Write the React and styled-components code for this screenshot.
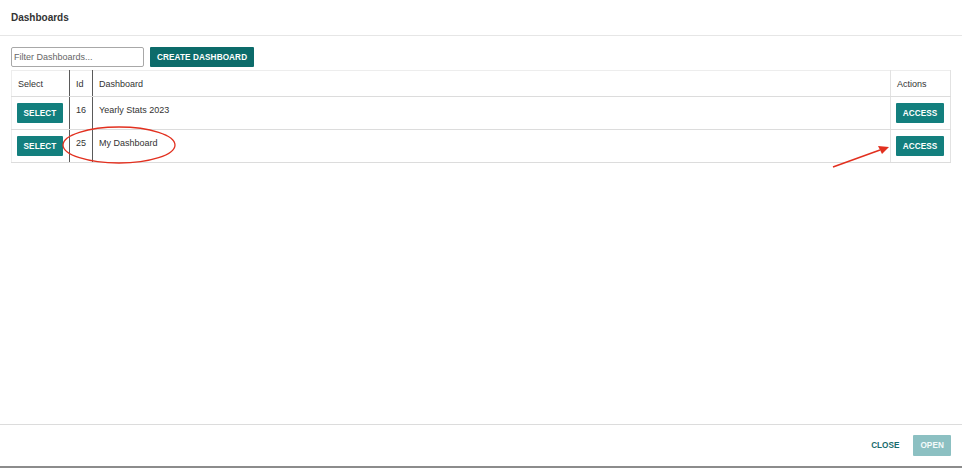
import React from 'react'
import styled, { createGlobalStyle } from 'styled-components'

const Global = createGlobalStyle`
  html, body { margin: 0; padding: 0; background: #fff; }
  body { font-family: "Liberation Sans", Arial, sans-serif; color: #333; }
  * { box-sizing: border-box; }
`

const Dialog = styled.div`
  width: 962px;
  height: 468px;
  display: flex;
  flex-direction: column;
  background: #fff;
  border-bottom: 2px solid #8c8c8c;
`

const Header = styled.div`
  height: 36px;
  padding: 0 11px;
  display: flex;
  align-items: center;
  border-bottom: 1px solid #e6e6e6;
  font-size: 10px;
  font-weight: bold;
  color: #333;
  padding-bottom: 1px;
`

const Content = styled.div`
  flex: 1;
  padding: 11px 11px 0 11px;
  position: relative;
`

const Toolbar = styled.div`
  display: flex;
  gap: 6px;
  height: 20px;
  margin-bottom: 3px;
`

const Filter = styled.input`
  width: 133px;
  height: 20px;
  border: 1px solid #a8a8a8;
  border-radius: 2px;
  padding: 0 2px;
  font-family: inherit;
  font-size: 9px;
  color: #333;
  outline: none;
  &::placeholder { color: #666; }
`

const Button = styled.button`
  border: none;
  border-radius: 1px;
  background: ${p => (p.$dark ? '#0c6b6a' : '#137f7e')};
  color: #fff;
  font-family: inherit;
  font-size: 8.2px;
  font-weight: bold;
  letter-spacing: 0.1px;
  height: ${p => p.$h || 20}px;
  width: ${p => (p.$w ? p.$w + 'px' : 'auto')};
  padding: 0 ${p => p.$px ?? 7}px;
  cursor: pointer;
  white-space: nowrap;
`

const Table = styled.table`
  width: 940px;
  table-layout: fixed;
  border-collapse: collapse;
  font-size: 9px;
  color: #333;
  border-top: 1px solid #ededed;
  border-left: 1px solid #ededed;
  border-right: 1px solid #a9a9a9;
  border-bottom: 1px solid #707070;
`

const Th = styled.th`
  height: 26px;
  text-align: left;
  font-weight: normal;
  padding: 0 6px;
  border-right: 1px solid ${p => (p.$dark ? '#5a5a5a' : '#e2e2e2')};
  border-bottom: 1px solid #dcdcdc;
  width: ${p => (p.$w ? p.$w + 'px' : 'auto')};
`

const Td = styled.td`
  height: 33px;
  padding: 0 ${p => (p.$btn ? 5 : 6)}px;
  vertical-align: ${p => (p.$btn ? 'middle' : 'top')};
  padding-top: ${p => (p.$btn ? 0 : 8)}px;
  border-right: 1px solid ${p => (p.$dark ? '#5a5a5a' : '#e2e2e2')};
  border-bottom: 1px solid #dcdcdc;
  line-height: 11px;
`

const Footer = styled.div`
  height: 42px;
  border-top: 1px solid #dcdcdc;
  display: flex;
  align-items: center;
  justify-content: flex-end;
  padding: 0 11px 0 0;
  gap: 6px;
`

const TextButton = styled.button`
  background: none;
  border: none;
  color: #186c6c;
  font-family: inherit;
  font-size: 8.2px;
  font-weight: bold;
  padding: 0 8px;
  height: 21px;
  cursor: pointer;
`

const Disabled = styled(Button)`
  background: #8cc0c2;
  color: #f4fafa;
  cursor: default;
`

const Overlay = styled.svg`
  position: absolute;
  left: 0;
  top: -36px;
  pointer-events: none;
  overflow: visible;
`

const rows = [
  { id: 16, name: 'Yearly Stats 2023' },
  { id: 25, name: 'My Dashboard' },
]

export default function App() {
  return (
    <>
      <Global />
      <Dialog>
        <Header>Dashboards</Header>
        <Content>
          <Toolbar>
            <Filter placeholder="Filter Dashboards..." />
            <Button $dark $px={7}>CREATE DASHBOARD</Button>
          </Toolbar>
          <Table>
            <thead>
              <tr>
                <Th $w={58} $dark>Select</Th>
                <Th $w={23} $dark>Id</Th>
                <Th>Dashboard</Th>
                <Th $w={60}>Actions</Th>
              </tr>
            </thead>
            <tbody>
              {rows.map(r => (
                <tr key={r.id}>
                  <Td $btn $dark><Button $w={46} $px={0}>SELECT</Button></Td>
                  <Td $dark>{r.id}</Td>
                  <Td>{r.name}</Td>
                  <Td $btn><Button $w={48} $px={0}>ACCESS</Button></Td>
                </tr>
              ))}
            </tbody>
          </Table>
          <Overlay width="962" height="400">
            <ellipse cx="119" cy="145" rx="56" ry="18" fill="none" stroke="#e2301f" strokeWidth="1.3" />
            <line x1="833" y1="167" x2="880" y2="150" stroke="#e2301f" strokeWidth="1.5" />
            <polygon points="889,147 878,146 882,154" fill="#e2301f" />
          </Overlay>
        </Content>
        <Footer>
          <TextButton>CLOSE</TextButton>
          <Disabled $h={21} $px={7}>OPEN</Disabled>
        </Footer>
      </Dialog>
    </>
  )
}
